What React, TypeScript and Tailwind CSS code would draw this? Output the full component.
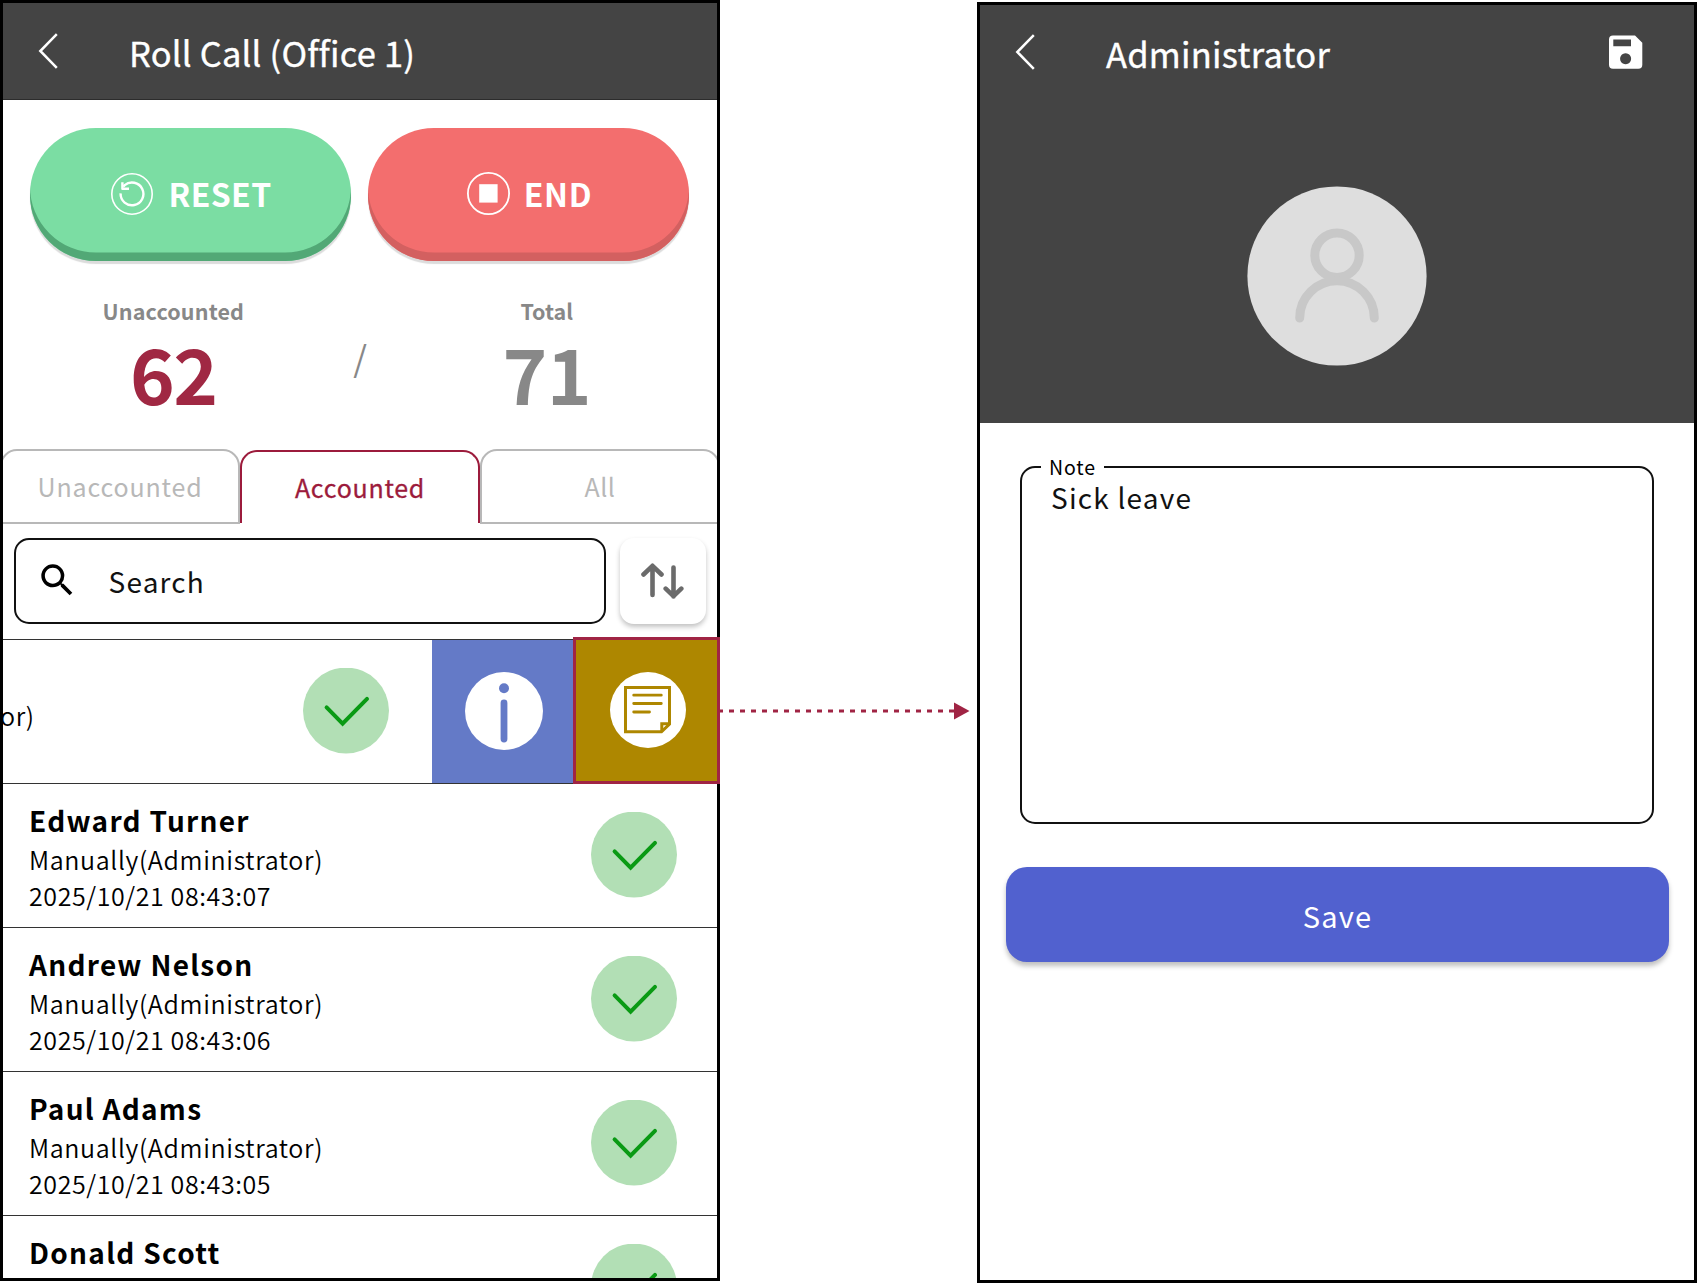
import type { ReactNode } from "react";

const people = [
  { name: "Edward Turner", time: "2025/10/21 08:43:07" },
  { name: "Andrew Nelson", time: "2025/10/21 08:43:06" },
  { name: "Paul Adams", time: "2025/10/21 08:43:05" },
  { name: "Donald Scott", time: "2025/10/21 08:43:04" },
];

function BackIcon() {
  return (
    <svg width="20" height="38" viewBox="0 0 20 38" fill="none" stroke="#fff" strokeWidth="2.5" className="shrink-0">
      <path d="M18.8 2.2 2.3 19l16.5 16.8" />
    </svg>
  );
}

function CheckBadge() {
  return (
    <svg width="86" height="86" viewBox="0 0 86 86" fill="none" className="shrink-0">
      <circle cx="43" cy="42.6" r="43" fill="#b2dfb5" />
      <path d="M23.6 39.4 39.6 55.6 64 30.9" stroke="#0a9a14" strokeWidth="4" strokeLinecap="round" />
    </svg>
  );
}

function PillButton({ tone, icon, children }: { tone: string; icon: ReactNode; children: ReactNode }) {
  return (
    <button className={`flex h-[132.5px] w-[321px] items-center justify-center rounded-[66px] text-white ${tone}`}>
      {icon}
      {children}
    </button>
  );
}

function RollCall() {
  return (
    <section className="flex h-[1281px] w-[720px] shrink-0 flex-col border-[3px] border-black bg-white">
      <header className="flex h-[96.5px] shrink-0 items-center border-b border-[#2c2c2c] bg-[#444] pl-[35px] text-white">
        <BackIcon />
        <h1 className="pt-[2px] pl-[71px] text-[34.5px] leading-[50px] tracking-[0.2px] [-webkit-text-stroke:0.35px_#fff]">
          Roll Call (Office 1)
        </h1>
      </header>

      <div className="flex shrink-0 gap-[17px] pt-[28.5px] pl-[27px]">
        <PillButton
          tone="bg-[#7bdda3] pl-[2px] shadow-[inset_0_-8.5px_0_#52a876,0_3px_1px_#dcdcdc]"
          icon={
            <svg width="42" height="42" viewBox="0 0 42 42" fill="none" stroke="#fff" className="-mt-[1px] shrink-0">
              <circle cx="21" cy="21" r="20.2" strokeWidth="1.6" />
              <path d="M9.6 20.4a11.4 11.4 0 1 0 4.1-8.3l-1.4 1.5" strokeWidth="2.4" />
              <path d="M11.4 9.2v6.6h6.6" strokeWidth="2.4" strokeLinejoin="round" />
            </svg>
          }
        >
          <span className="-mt-[3px] pl-[15px] text-[32px] leading-[40px] font-bold tracking-[0.4px]">RESET</span>
        </PillButton>
        <PillButton
          tone="bg-[#f36e6e] pl-[2px] shadow-[inset_0_-8.5px_0_#d36060,0_3px_1px_#dcdcdc]"
          icon={
            <svg width="43" height="43" viewBox="0 0 43 43" fill="none" className="-mt-[2px] shrink-0">
              <circle cx="21.5" cy="21.5" r="20.6" stroke="#fff" strokeWidth="1.8" />
              <rect x="12.2" y="12.2" width="18.4" height="18.4" fill="#fff" />
            </svg>
          }
        >
          <span className="-mt-[3px] pl-[14px] text-[32px] leading-[40px] font-bold tracking-[0.6px]">END</span>
        </PillButton>
      </div>

      <div className="mt-[34px] ml-[77px] grid w-[560px] shrink-0 grid-cols-3 text-center text-[#888]">
        <div>
          <div className="text-[21.5px] leading-[31px] font-bold tracking-[0.15px]">Unaccounted</div>
          <div className="pt-[6px] text-[76px] leading-[80px] font-bold tracking-[-1.5px] text-[#a02843]">62</div>
        </div>
        <div className="pt-[42px] text-[35px] leading-[40px]">/</div>
        <div>
          <div className="text-[21.5px] leading-[31px] font-bold">Total</div>
          <div className="pt-[6px] text-[76px] leading-[80px] font-bold tracking-[-0.8px]">71</div>
        </div>
      </div>

      <nav className="mt-[37.5px] -mr-[3px] -ml-[3px] flex h-[75px] shrink-0 text-center text-[25px] leading-[71px] tracking-[0.85px] text-[#b8b8b8] [clip-path:inset(0_3px)]">
        <div className="w-[240px] rounded-t-[17px] border-2 border-[#b8b8b8]">Unaccounted</div>
        <div className="mt-px mb-px w-[240px] rounded-t-[17px] border-2 border-b-0 border-[#9c1b3c] tracking-[0.75px] text-[#9c1b3c] [-webkit-text-stroke:0.3px_#9c1b3c]">
          Accounted
        </div>
        <div className="w-[240px] rounded-t-[17px] border-2 border-[#b8b8b8] tracking-[0.5px]">All</div>
      </nav>

      <div className="mt-[14px] flex shrink-0 gap-[14px] pl-[11px]">
        <div className="flex h-[86px] w-[591.5px] items-center rounded-[15px] border-2 border-[#111] pl-[20px]">
          <svg width="42.5" height="42.5" viewBox="0 0 24 24" className="-mt-[2px] shrink-0">
            <path d="M15.5 14h-.79l-.28-.27A6.471 6.471 0 0 0 16 9.5 6.5 6.5 0 1 0 9.500 16c1.610 0 3.090-.59 4.230-1.570l.27.28v.79l5 4.990L20.490 19l-4.990-5zm-6 0C7.010 14 5 11.990 5 9.500S7.010 5 9.500 5 14 7.010 14 9.500 11.990 14 9.500 14z" />
          </svg>
          <span className="pl-[30px] text-[28px] leading-[40px] tracking-[1.2px] text-[#111]">Search</span>
        </div>
        <button className="flex h-[86px] w-[86px] items-center justify-center rounded-[14px] bg-white pr-[1.5px] pb-px shadow-[0_3px_5px_#0000003d]">
          <svg width="44" height="36" viewBox="0 0 44 36" fill="none" stroke="#6b6b6b" strokeWidth="4.6" strokeLinecap="round" strokeLinejoin="round">
            <path d="M12.500 32V3M3.500 11.500 12.500 2.800l9 8.700M33.500 4.500v29M25.700 25.700l7.800 7.500 7.800-7.500" />
          </svg>
        </button>
      </div>

      <div className="mt-[14.5px] -mr-[3px] flex h-[145px] shrink-0 border-y border-[#333]">
        <div className="flex flex-1 items-center justify-between overflow-hidden">
          <span className="-ml-[3px] pt-[8px] text-[25px] leading-[36px] font-[350] tracking-[0.65px]">or)</span>
          <div className="pr-[43px]">
            <CheckBadge />
          </div>
        </div>
        <button className="flex w-[141px] items-center justify-center bg-[#647ac7] pl-[2px]">
          <svg width="78" height="78" viewBox="0 0 78 78" className="-mt-px">
            <circle cx="39" cy="39" r="39" fill="#fff" />
            <circle cx="39" cy="16.300" r="5" fill="#647ac7" />
            <rect x="35.600" y="27.500" width="6.800" height="43" rx="3.400" fill="#647ac7" />
          </svg>
        </button>
        <button className="-mt-[3px] -mb-px flex w-[147px] items-center justify-center border-[3px] border-[#a02444] bg-[#ae8700] pl-[3px]">
          <svg width="76" height="76" viewBox="0 0 76 76" fill="none" stroke="#ae8700" strokeWidth="3">
            <circle cx="38" cy="38" r="38" fill="#fff" stroke="none" />
            <path d="M15.500 15.500H59.500V52L51.500 59.800H15.500Z" />
            <path d="M51.800 59.500V51.800H59.500" />
            <path d="M23.700 23.200H51.300M23.700 31.500H51.300M23.700 40H39.500" strokeLinecap="round" strokeWidth="2.800" />
          </svg>
        </button>
      </div>

      <div className="flex-1 overflow-hidden">
        {people.map((p) => (
          <div key={p.name} className="flex h-[144.1px] items-center justify-between border-b border-[#333] pr-[40px] pl-[26px]">
            <div className="pt-[2px] font-[350]">
              <div className="mb-px text-[28px] leading-[40px] font-bold tracking-[1.28px]">{p.name}</div>
              <div className="text-[25px] leading-[36px] tracking-[0.63px]">Manually(Administrator)</div>
              <div className="text-[25px] leading-[36px] tracking-[0.6px]">{p.time}</div>
            </div>
            <CheckBadge />
          </div>
        ))}
      </div>
    </section>
  );
}

function NoteEditor() {
  return (
    <section className="mt-[2px] flex h-[1281px] w-[720px] shrink-0 flex-col border-[3px] border-black bg-white">
      <header className="flex h-[418px] shrink-0 flex-col items-center bg-[#444] text-white">
        <div className="flex h-[94px] w-full items-center pr-[51px] pl-[35px]">
          <BackIcon />
          <h1 className="flex-1 pt-[2px] pl-[71px] text-[34.5px] leading-[50px] tracking-[0.25px] [-webkit-text-stroke:0.35px_#fff]">
            Administrator
          </h1>
          <svg width="34" height="34" viewBox="0 0 34 34" className="shrink-0">
            <path
              fillRule="evenodd"
              fill="#fff"
              d="M4 .5H26L33.300 7.800V29.700a4 4 0 0 1-4 4H4a4 4 0 0 1-4-4V4.500a4 4 0 0 1 4-4ZM4.300 4.500V11.200H22V4.500ZM16.600 18.300a5.500 5.500 0 1 0 .01 0Z"
            />
          </svg>
        </div>
        <svg width="180" height="180" viewBox="0 0 180 180" fill="none" className="mt-[87px]">
          <circle cx="90" cy="90" r="89.600" fill="#dedede" />
          <g stroke="#c8c8c8" strokeWidth="9" strokeLinecap="round">
            <circle cx="90" cy="69.200" r="22.200" />
            <path d="M52.700 132a37.300 37.300 0 0 1 74.600 0" />
          </g>
        </svg>
      </header>

      <fieldset className="mt-[33px] ml-[40px] h-[368px] w-[634px] shrink-0 rounded-[15px] border-2 border-[#111] pl-[29px]">
        <legend className="-ml-[10px] px-[8px] text-[19.5px] leading-[22px] tracking-[0.9px]">Note</legend>
        <p className="-mt-[2px] text-[28px] leading-[42px] tracking-[1.2px] text-[#111]">Sick leave</p>
      </fieldset>

      <button className="mt-[43px] ml-[25.500px] h-[95px] w-[663px] shrink-0 rounded-[21px] bg-[#5161cf] pt-[3px] pl-px text-[29px] tracking-[1.2px] text-white shadow-[0_4px_5px_#00000040]">
        Save
      </button>
    </section>
  );
}

export default function App() {
  return (
    <main className="flex h-[1283px] w-[1697px] overflow-hidden bg-white font-['Noto_Sans_CJK_JP','Noto_Sans',sans-serif] text-black">
      <RollCall />
      <svg width="257" height="18" viewBox="0 0 257 18" className="mt-[702px] shrink-0">
        <path d="M0 9H234" stroke="#a02444" strokeWidth="2.800" strokeDasharray="5 6" strokeDashoffset="2" />
        <path d="M234 .5 249.500 9 234 17.500Z" fill="#a02444" />
      </svg>
      <NoteEditor />
    </main>
  );
}
